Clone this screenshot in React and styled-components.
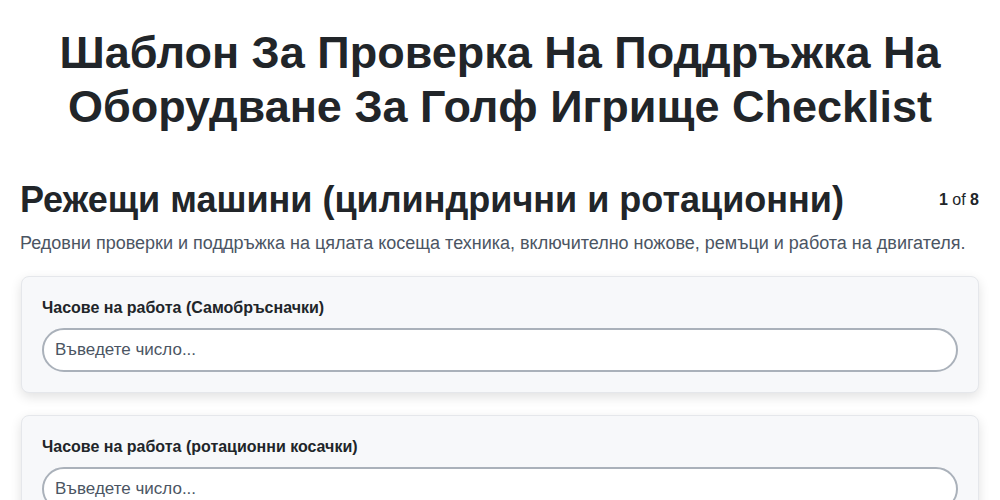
import React from "react";
import styled, { createGlobalStyle } from "styled-components";

const GlobalStyle = createGlobalStyle`
  body {
    margin: 0;
    background: #fff;
    font-family: "Liberation Sans", Arial, sans-serif;
    color: #212529;
  }
`;

const Page = styled.div`
  padding: 0 20px;
`;

const Title = styled.h1`
  margin: 0;
  padding: 26px 30px 0;
  text-align: center;
  font-size: 45px;
  line-height: 54px;
  font-weight: 700;
  color: #212529;
`;

const SectionHead = styled.div`
  display: flex;
  align-items: center;
  justify-content: space-between;
  margin-top: 44px;
`;

const SectionTitle = styled.h2`
  margin: 0;
  font-size: 36px;
  line-height: 44px;
  font-weight: 700;
`;

const Counter = styled.div`
  font-size: 16px;
  padding-right: 1px;
  b {
    font-weight: 700;
  }
`;

const Description = styled.p`
  margin: 9px 0 21px;
  font-size: 18px;
  line-height: 24px;
  color: #4b5563;
`;

const Card = styled.div`
  background: #f7f8fa;
  border: 1px solid #e5e7eb;
  border-radius: 8px;
  box-shadow: 0 4px 12px rgba(0, 0, 0, 0.12);
  padding: 21px 20px 20px;
  margin: 0 1px 22px;
`;

const Label = styled.label`
  display: block;
  font-size: 16px;
  font-weight: 700;
  line-height: 20px;
  margin-bottom: 10px;
`;

const Input = styled.input`
  box-sizing: border-box;
  width: 100%;
  height: 44px;
  border: 2px solid #aab1ba;
  border-radius: 22px;
  background: #fff;
  padding: 0 11px;
  font-family: inherit;
  font-size: 17px;
  color: #212529;
  outline: none;
  &::placeholder {
    color: #4b5563;
  }
`;

const fields = [
  "Часове на работа (Самобръсначки)",
  "Часове на работа (ротационни косачки)",
];

export default function App() {
  return (
    <>
      <GlobalStyle />
      <Page>
        <Title>Шаблон За Проверка На Поддръжка На Оборудване За Голф Игрище Checklist</Title>
        <SectionHead>
          <SectionTitle>Режещи машини (цилиндрични и ротационни)</SectionTitle>
          <Counter>
            <b>1</b> of <b>8</b>
          </Counter>
        </SectionHead>
        <Description>
          Редовни проверки и поддръжка на цялата косеща техника, включително ножове, ремъци и работа на двигателя.
        </Description>
        {fields.map((f) => (
          <Card key={f}>
            <Label>{f}</Label>
            <Input type="number" placeholder="Въведете число..." />
          </Card>
        ))}
      </Page>
    </>
  );
}
